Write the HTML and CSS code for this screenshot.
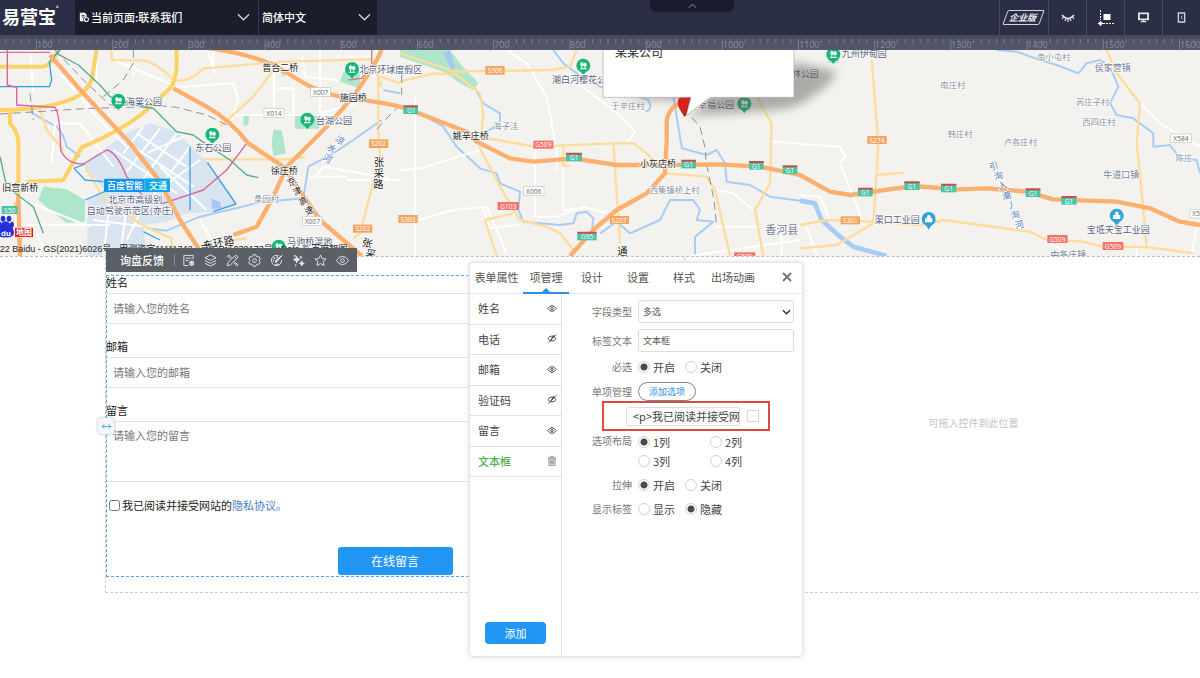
FILE: index.html
```html
<!DOCTYPE html>
<html lang="zh-CN">
<head>
<meta charset="utf-8">
<title>易营宝</title>
<link rel="stylesheet" href="styles.css">
</head>
<body>
<header class="topbar">
  <div class="logo">易营宝<sup>®</sup></div>
  <div class="pick pick-page">
    <svg class="pick-icon" viewBox="0 0 12 12" width="10" height="12"><path d="M1 1h6l2 2v3a3 3 0 0 0-3 5H1z" fill="#fff"/><path d="M3 4h4M3 6h3" stroke="#1b1d2d"/><circle cx="9" cy="9" r="2.4" fill="none" stroke="#fff" stroke-width="1.3"/></svg>
    <select aria-label="当前页面"><option>当前页面:联系我们</option></select>
    <svg class="chev" viewBox="0 0 14 8" width="13" height="8"><path d="M1 1l6 6 6-6" fill="none" stroke="#d6d8e0" stroke-width="1.3"/></svg>
  </div>
  <div class="pick pick-lang">
    <select aria-label="语言"><option>简体中文</option></select>
    <svg class="chev" viewBox="0 0 14 8" width="13" height="8"><path d="M1 1l6 6 6-6" fill="none" stroke="#d6d8e0" stroke-width="1.3"/></svg>
  </div>
  <button class="pull" aria-label="收起"><svg viewBox="0 0 10 6" width="9" height="6"><path d="M1 5l4-4 4 4" fill="none" stroke="#9a9dab"/></svg></button>
  <nav class="tools">
    <button class="tool tool-wide"><span class="edition">企业版</span></button>
    <button class="tool" aria-label="隐藏"><svg viewBox="0 0 14 10" width="14" height="10"><path d="M1 2q6 7 12 0" fill="none" stroke="#e3e4ea" stroke-width="1.500"/><path d="M2.500 4L1 6M5 5.500L4 8M7 6v3M9 5.500l1 2.500M11.500 4L13 6" fill="none" stroke="#e3e4ea" stroke-width="1.200"/></svg></button>
    <button class="tool" aria-label="参考线"><svg viewBox="0 0 16 16" width="16" height="16"><path d="M2.500 0v10M5 13.500h11" stroke="#fff" stroke-dasharray="2 1"/><circle cx="2.500" cy="13.500" r="1.500" fill="#2b2f45" stroke="#fff"/><path d="M2.500 11v5M0 13.500h5" stroke="#fff"/><path d="M5.500 4h7v6h-7z" fill="#fff"/></svg></button>
    <button class="tool" aria-label="电脑"><svg viewBox="0 0 12 12" width="11" height="11"><path d="M1 1.500h10v6.500H1z" fill="none" stroke="#e3e4ea" stroke-width="2"/><path d="M6 8v2M3 10.500h6" stroke="#e3e4ea" stroke-width="1.500"/></svg></button>
    <button class="tool" aria-label="手机"><svg viewBox="0 0 10 12" width="9" height="11"><path d="M1.500 1h7v10h-7z" fill="none" stroke="#d0d2da" stroke-width="1.500"/><path d="M6 4L4.500 5.500 6 8" fill="none" stroke="#d0d2da"/></svg></button>
  </nav>
</header>

<svg class="ruler" width="100%" height="15" aria-hidden="true">
  <defs>
    <linearGradient id="rg" x2="0" y2="1"><stop offset="0" stop-color="#434757"/><stop offset=".4" stop-color="#4f5466"/><stop offset="1" stop-color="#525769"/></linearGradient>
    <pattern id="ticks" x="36" width="76.2" height="15" patternUnits="userSpaceOnUse">
      <path d="M.5 4V15M8.100 4v4M15.700 4v4M23.300 4v4M31 4v4M38.600 4v5M46.200 4v4M53.800 4v4M61.400 4v4M69 4v4" stroke="#858a99" stroke-width=".8"/>
    </pattern>
  </defs>
  <rect width="100%" height="15" fill="url(#rg)"/><rect width="100%" height="15" fill="url(#ticks)"/>
  <g class="ruler-num"><text x="37" y="13">100</text><text x="113" y="13">200</text><text x="189" y="13">300</text><text x="265" y="13">400</text><text x="341" y="13">500</text><text x="418" y="13">600</text><text x="494" y="13">700</text><text x="570" y="13">800</text><text x="646" y="13">900</text><text x="723" y="13">1000</text><text x="799" y="13">1100</text><text x="875" y="13">1200</text><text x="951" y="13">1300</text><text x="1027" y="13">1400</text><text x="1104" y="13">1500</text><text x="1180" y="13">1600</text></g>
</svg>

<section class="map">
<svg viewBox="0 150 3600 618" preserveAspectRatio="xMidYMid slice" role="img" aria-label="地图">
  <defs>
    <filter id="soft" x="-20%" y="-20%" width="140%" height="140%"><feGaussianBlur stdDeviation="14"/></filter>
    <g id="park"><path d="M-10 16L0 29 10 16z" fill="#17b877"/><circle r="21" fill="#17b877"/><path d="M-5-11a6 7 0 0 1 2 13v6h7V3a5 6 0 0 1 1-12 5 6 0 0 1 1 12v5h4v3h-20V8h4V2a6 7 0 0 1 1-13z" fill="#fff"/></g>
    <g id="works"><path d="M-10 16L0 32 10 16z" fill="#2ba3dd"/><circle r="21" fill="#2ba3dd"/><path d="M-11 10V-2h6v-7l5-4 6 4v7h5v12z" fill="#fff"/></g>
  </defs>
  <rect y="150" width="3600" height="618" fill="#f3f2ee"/>
  <path fill="#d8e5f0" d="M250 490L380 400 450 370 530 395 575 440 622 487 708 612 640 635 560 640 500 665 430 675 440 768H262V600L310 570z"/>
  <path fill="#aee6cb" d="M130 560l70 8 55 32v65l-55 3-50-38-35-30zM820 390h25l13 70-38 8-5-38zM730 348h17l-2 27-15 3zM885 348h72v38h-72zM1030 215h50v50l-60-20zM1200 150h150l30 40 55 60-15 20-40-20-50-35-130-45zM840 215l20 5-10 12zM2485 170h30v18h-30z"/>
  <path fill="#a9c6f5" d="M635 595l25 12 5 18-30 3zM1330 160l20-10 15 55-10 5z"/>
  <g class="river">
    <path d="M1200 280l-50-10M1145 360L1060 420 1000 460 925 500 910 595 780 607 708 625 600 650 500 692 440 685M90 335q40 25 80 45 20 20 30 60l40 30"/>
    <path d="M1200 320l60 20 70 40 40 60 70 65 50 15 10 30 60 25-5 55 15 35 110 10 40-5 10-30 30-5 20 20-5 45M1800 700l50-35 40 35 90-40 30-60h70l20 30-10 30 50 5-55 45v58"/>
    <path d="M1425 265l25 45 50 30v30l-40 25-30 30M1660 150l30 40 40 30 70 40 90 20 55 20q15 30-10 35M2020 290l25 150 0 5 75 20 30-15 25 40 5 55 70 10 60 35 90 12"/>
    <path d="M2990 150l60 5 70 25 50 15 65 25 25-30 40-10 30 20 25 60-25 50 20 35 50 10 60 45v40l50-5 30 40 50 5 10 40"/>
  </g>
  <path class="river wide" d="M2400 602l45 8 20 50 55 50 40 30 100 28"/>
  <g class="street">
    <path d="M90 150l10 130M180 220l110 130 90 90M290 182v80M340 180l180 75M400 170v60M640 150v60l0-10M625 160l20 60M520 262l180-12M700 248l15 50-20 60M160 370h80L340 500M165 370l-10 120M822 200v145h-130M822 345h180M960 150v190l110-30M905 170l10 60 100 10M830 265h50v80M1010 170h100l20 60M0 675h330M70 600l200 80M100 680l40 88M930 530h110M940 540l30-40 200 35M660 768l-60-110M1040 540l160 0M1130 150v40l70 10"/>
    <path d="M1520 150l60 40 60 100 30 160v60M1740 255l100 75 65 65-25 35M1200 510l60-5 180-55M1245 290v478M1255 660l105-30 100-10 60 140M1605 440v210h65l80-30 90 25M1690 500v130l60-5M2315 425l85 5M2150 570l50 10 60 50M2145 680h255M2070 768l330-48M2345 680v88M1450 625l20 60 90-10"/>
    <path d="M2400 432l120 8 15 30-15 20 67 170M3420 310l60 60 120 70M2400 585l60 5 30 70M2420 680l30 88M3130 720l90 48M3410 740v28M3590 680l-15 88"/>
    <path d="M370 420l210 140M340 450l190 130M430 380l-60 80M480 385l-100 130M530 400l-110 150M570 440L450 600M600 480L460 580M280 660l160 20M330 600l-20 168M380 620l-20 148M430 620l-50 100M480 500l140 130M440 460l110-50M410 400l150 100"/>
  </g>
  <g class="minor">
    <path d="M335 150v30l105 2q60 30 80 58 50 10 90-35l240-20 265-7M835 190l-75 100-100 90 M120 330l20 60 50 60M255 500l60 100 120 80 80 35V768M610 478h245l60-6M1140 230l60 20M1135 200v190l5 80-60 230-20 15M700 720l40-5M1115 180l30 80"/>
    <path d="M1200 160l120 40 40 15 290-5 60-10 20-50M1200 245l100-25 70 5 70 55 10 60-10 105 60 115 60 100 80 20 40 20 40 50M1460 415l90 15 50 10 240-10h60l40 30 30 30M1840 430l20 300M1690 430v67h20M2270 290l45 80-5 180-45 80 25 138M2000 520l120 10 25 40 45 198M1455 660l85-20M1455 660l35 108"/>
    <path d="M2615 180l20 250-15 245M2630 525l80-7M3320 150l30 70 70 90-10 120 10 90 20 220M2400 675l80-15 140 5 140 10 70-15 220 30 40 5 50 25 110 5 50 13 150 4 130 18M2400 745l110-10 110-65"/>
  </g>
  <g class="major"><path d="M0 200h130q25-5 45-50M290 150l-15 90q-15 30-35 45-80 45-240 45M30 330v40q30 30 25 80v150l-20 40M530 150v40q0 50-20 75l-70 65q-70 60-195 112l-55 98-110 5"/></g>
  <g class="rail"><path d="M165 150l85 90 80 75h120l80 7 90 23 80 40 60 50 120 100M400 150v40l-30 50-60 50M0 342l270-17 180-5M90 280l10 80M1200 315l-50 50-25 30M1205 225v60M2050 325l50 55 17 70v30l25 120 8 80"/></g>
  <g class="metro">
    <path stroke="#2aa2dc" d="M0 260h148l7-20-7-55 32-35"/>
    <path stroke="#52ad91" d="M170 160l65 35 65 60 30 35q70 30 130 35l70 70 50 10 35 25 75 50 50 45 35 8M0 470l20 90 80 60 30 80"/>
    <path stroke="#d962a0" d="M22 150v105l28 7v53l115 7q15 18 17 128 18 42 68 42l70-42q30 5 60 80l50 60 60 20 120-40 70-60 60-80"/>
    <path stroke="#cf7b86" d="M0 157h150M1045 240l40-5 30-40v-45"/>
    <path stroke="#3f9fe8" d="M222 505l33-13M222 505l33 35 55 5M570 440v190M622 487l86 125-68 23M255 600l70-30M430 695l50 25"/>
  </g>
  <g class="express"><path d="M150 165l100 115 140 150 90 115 60 115 70 108M520 265l100 55q70 40 125 110l105 70 110 160 125 108M1145 150l-25 50-60 90-80 90-120 120-40 90-50 90-70 25M55 590l5 178"/>
    <path d="M630 145q110 15 190 50c60 30 100 70 180 90s150 15 230 45l170 65 30 30 100 50 70 10 120-10 130 20 150 0 160-2 120 7 120 25 90 50 60 10 70-10 120-17 130 10 90-3 120 10 80 23 190 7 100 20 90 40 60 10M2060 300q-60 20-60 70l0 50-5 100-55 60-90 50-70 60-70 78"/></g>

  <g class="tag tag-w"><rect x="932" y="263" width="60" height="26"/><rect x="792" y="326" width="60" height="26"/><rect x="1570" y="560" width="62" height="26"/><rect x="908" y="650" width="58" height="26"/><rect x="3512" y="402" width="62" height="26"/><rect x="3570" y="628" width="62" height="26"/></g>
  <g class="tag tag-o"><rect x="1456" y="198" width="58" height="26"/><rect x="1107" y="418" width="58" height="26"/><rect x="1195" y="645" width="58" height="24"/><rect x="1059" y="674" width="58" height="24"/><rect x="1830" y="648" width="57" height="24"/><rect x="2602" y="408" width="58" height="24"/><rect x="2522" y="649" width="58" height="24"/></g>
  <g class="tag tag-r"><rect x="1600" y="422" width="60" height="24"/><rect x="1493" y="606" width="64" height="24"/><rect x="3142" y="705" width="61" height="24"/><rect x="3308" y="726" width="62" height="24"/><rect x="2202" y="757" width="64" height="24"/></g>
  <g class="tag tag-g"><rect x="1210" y="318" width="44" height="24"/><rect x="1698" y="460" width="48" height="24"/><rect x="2044" y="481" width="44" height="24"/><rect x="2247" y="485" width="44" height="24"/><rect x="2348" y="498" width="44" height="24"/><rect x="1732" y="697" width="58" height="24"/><rect x="2574" y="565" width="44" height="24"/><rect x="2713" y="546" width="46" height="24"/><rect x="2823" y="553" width="46" height="24"/><rect x="3077" y="567" width="44" height="24"/><rect x="3184" y="590" width="46" height="24"/><rect x="5" y="618" width="48" height="24"/></g>
  <path stroke="#c7524d" stroke-width="6" d="M1210 319h44M1698 461h48M2044 482h44M2247 486h44M2348 499h44M1732 698h58M2574 566h44M2713 547h46M2823 554h46M3077 568h44M3184 591h46"/>
  <g class="tagtext dark"><text x="962" y="284">X007</text><text x="822" y="347">X014</text><text x="1601" y="581">X006</text><text x="937" y="671">X007</text><text x="3543" y="423">X584</text><text x="3600" y="649">X584</text></g>
  <g class="tagtext"><text x="1485" y="219">S306</text><text x="1136" y="438">S202</text><text x="1224" y="665">S303</text><text x="1088" y="694">S202</text><text x="1858" y="668">S207</text><text x="2631" y="428">S274</text><text x="2551" y="669">S301</text><text x="1630" y="442">G509</text><text x="1525" y="626">G103</text><text x="3172" y="725">G509</text><text x="3339" y="746">G509</text><text x="2234" y="777">G509</text><text x="1234" y="339">G1</text><text x="1722" y="481">G1</text><text x="2066" y="502">G1</text><text x="2269" y="506">G1</text><text x="2370" y="519">G1</text><text x="1761" y="718">G95</text><text x="2596" y="586">G1</text><text x="2736" y="567">G1</text><text x="2846" y="574">G1</text><text x="3099" y="588">G1</text><text x="3207" y="611">G1</text><text x="29" y="639">S50</text></g>

  <use href="#park" x="355" y="302"/><use href="#park" x="1056" y="207"/><use href="#park" x="922" y="359"/><use href="#park" x="637" y="404"/><use href="#park" x="1750" y="197"/><use href="#park" x="2500" y="163"/><use href="#park" x="2233" y="311"/><use href="#park" x="836" y="740"/>
  <use href="#works" x="2786" y="657"/><use href="#works" x="3350" y="647"/>

  <g class="place"><text x="378" y="315">海棠公园</text><text x="1078" y="219">北京环球度假区</text><text x="948" y="372">台湖公园</text><text x="586" y="454">东石公园</text><text x="1656" y="248">潮白河樱花公</text><text x="2525" y="172">九州伊甸园</text><text x="2375" y="231">林公园</text><text x="2094" y="323">幸福公园</text><text x="325" y="610">北京市高级别</text><text x="260" y="641">自动驾驶示范区(亦庄)</text><text x="2624" y="668">渠口工业园</text><text x="3260" y="700">宝坻天宝工业园</text><text x="862" y="735">马驹桥湿地</text></g>
  <g class="place bridge"><text x="787" y="214">普合二桥</text><text x="1019" y="304">施园桥</text><text x="1358" y="417">姚辛庄桥</text><text x="1920" y="501">小灰店桥</text><text x="812" y="522">徐庄桥</text><text x="7" y="572">旧宫新桥</text></g>
  <g class="place bridge big"><text x="1852" y="764">通</text><text x="1122" y="497">张</text><text x="1121" y="531">采</text><text x="1120" y="565">路</text><text x="1086" y="740" transform="rotate(15 1100 730)">张</text><text x="1096" y="772" transform="rotate(15 1110 762)">采</text><text x="610" y="738" transform="rotate(-12 660 730)">东环路</text></g>
  <g class="place bridge"><text x="862" y="554" transform="rotate(-30 876 544)">京</text><text x="878" y="583" transform="rotate(-30 892 573)">津</text><text x="896" y="612" transform="rotate(-30 910 602)">高</text><text x="914" y="641" transform="rotate(-30 928 631)">速</text></g>
  <g class="place village"><text x="762" y="605">桑园村</text><text x="1480" y="388">海子洼</text><text x="1834" y="326">于辛庄村</text><text x="1949" y="580">西集镇桥上村</text><text x="3111" y="181">南小屯村</text><text x="2821" y="263">南庄村</text><text x="3228" y="314">芮庄子村</text><text x="3247" y="376">西四庄村</text><text x="2843" y="411">韩庄村</text><text x="3011" y="435">卢各庄村</text><text x="3527" y="484">陈庄</text></g>
  <g class="place town"><text x="3284" y="212">侯家营镇</text><text x="3310" y="535">牛道口镇</text><text x="3151" y="773">中各庄镇</text></g>
  <g class="place town county"><text x="2296" y="702">香河县</text></g>
  <g class="place water"><text x="1006" y="430" transform="rotate(35 1018 422)">凉</text><text x="984" y="455" transform="rotate(40 996 442)">水</text><text x="970" y="486" transform="rotate(30 984 474)">河</text><text x="2968" y="508" transform="rotate(-15 2982 498)">引</text><text x="2982" y="537" transform="rotate(-15 2996 527)">洵</text><text x="2994" y="567" transform="rotate(-15 3006 556)">入</text><text x="3006" y="597" transform="rotate(-15 3020 587)">潮</text><text x="3020" y="626" transform="rotate(-15 3032 616)">丿</text><text x="3032" y="654" transform="rotate(-15 3044 644)">洵</text><text x="3044" y="684" transform="rotate(-15 3056 673)">河</text></g>

  <rect x="312" y="536" width="198" height="40" rx="4" fill="#1095ee"/><path d="M434 536h72q4 0 4 4v32q0 4-4 4h-72z" fill="#10a9e8"/><path d="M434 540v32" stroke="#7ccbf7" stroke-width="2"/>
  <g class="badge"><text x="321" y="566">百度智能</text><text x="447" y="566">交通</text></g>

  <path d="M1850 300L2400 190 2510 215Q2500 250 2440 285 2410 320 2330 330L2120 345 2060 350 2140 300z" fill="#555" opacity=".45" filter="url(#soft)"/>
  <path d="M2054 350Q2034 325 2034 312a25 24 0 0 1 50-10Q2080 325 2054 350z" fill="#d8201f"/><path d="M2050 350L2075 292V330z" fill="#a61515"/>
  <path d="M1809 140V292H2073L2058 347 2131 292H2382V140z" fill="#fff" stroke="#aaa" stroke-width="2"/>
  <text class="company" x="1845" y="172">某某公司</text>

  <g fill="#2632d9"><path d="M17 664C30 664 42 685 42 700q-2 14-25 12Q-8 714-10 698C-8 684 5 664 17 664z" stroke="#fff" stroke-width="3" paint-order="stroke"/><ellipse cx="-2" cy="674" rx="7" ry="10"/><ellipse cx="9" cy="656" rx="7" ry="9"/><ellipse cx="27" cy="656" rx="7" ry="9"/><ellipse cx="36" cy="674" rx="6" ry="9"/></g>
  <text class="baidu" x="3" y="708">du</text>
  <rect x="44" y="682" width="56" height="30" fill="#e01b1b" stroke="#fff" stroke-width="2"/><text class="baidu" x="48" y="706">地图</text>
  <text class="copyright" x="-1" y="755">22 Baidu - GS(2021)6026号 - 甲测资字11111342 - 京ICP证030173号 - Data © 百度智图</text>
</svg>
</section>

<main class="stage">
  <div class="columns">
    <div class="column">
      <form class="inquiry">
        <div class="toolbar">
          <span class="toolbar-name">询盘反馈</span>
          <button type="button" aria-label="表单"><svg viewBox="0 0 14 14"><path d="M12 6V1.500H2v11h5M4 4.500h6M4 7h3"/><circle cx="10.500" cy="10" r="2.200"/><path d="M10.500 7v6M8 8.500l5 3M13 8.500l-5 3"/></svg></button>
          <button type="button" aria-label="层级"><svg viewBox="0 0 14 14"><path d="M7 1l6 3-6 3-6-3zM1 7l6 3 6-3M1 10l6 3 6-3"/></svg></button>
          <button type="button" aria-label="设计"><svg viewBox="0 0 14 14"><path d="M1.500 12.500l.5-3L10.500 1l2.500 2.500L4.500 12zM5 5L1.500 2.500 3 1l3 3M9 8.500l4 3-1.500 1.500-3-3.500M9 2.500L11.500 5"/></svg></button>
          <button type="button" aria-label="设置"><svg viewBox="0 0 14 14"><path d="M5.500.800h3l.500 1.700 1.200.700 1.700-.400 1.400 2.500L12 6.500v1l1.300 1.200-1.400 2.500-1.700-.400-1.200.700-.500 1.700h-3L5 11.500l-1.200-.700-1.700.400L.700 8.700 2 7.500v-1L.700 5.300l1.400-2.500 1.700.400L5 2.500z"/><circle cx="7" cy="7" r="2"/></svg></button>
          <button type="button" aria-label="样式"><svg viewBox="0 0 14 14"><path d="M9.500 2A5.500 5.500 0 1 0 12.500 6.500M5 12.500q3-3 5-1"/><path d="M13 1.500L8 7.500 6 9.500 6.300 7z" fill="#e8e9eb"/><path d="M3 7h1.500M4 4.500h1.500M7 3.500h1.500" stroke-width="1.600"/></svg></button>
          <button type="button" aria-label="动画"><svg viewBox="0 0 14 14"><path d="M5 2.500l1 2.500 2.500 1L6 7 5 9.500 4 7 1.500 6 4 5zM10.500 7.500l.7 2 2 .7-2 .7-.7 2-.7-2-2-.7 2-.7z" fill="#e8e9eb"/><path d="M9.500 2v3M8 3.500h3M3 1v2M2 2h2M4 11v2.500"/></svg></button>
          <button type="button" aria-label="收藏"><svg viewBox="0 0 14 14"><path d="M7 1l1.800 4 4.200.400-3.200 2.800 1 4.300L7 10.300 3.200 12.500l1-4.300L1 5.400 5.200 5z"/></svg></button>
          <button type="button" aria-label="预览"><svg viewBox="0 0 14 14"><path d="M.5 7Q3 2.500 7 2.500T13.500 7Q11 11.500 7 11.500T.5 7z"/><circle cx="7" cy="7" r="2"/></svg></button>
        </div>
        <label for="name">姓名</label>
        <input class="line" id="name" type="text" placeholder="请输入您的姓名">
        <label for="mail">邮箱</label>
        <input class="line" id="mail" type="text" placeholder="请输入您的邮箱">
        <label for="msg">留言</label>
        <textarea class="line" id="msg" placeholder="请输入您的留言"></textarea>
        <div class="agree"><input type="checkbox" id="agree"><label for="agree">我已阅读并接受网站的</label><a href="#">隐私协议。</a></div>
        <button type="button" class="submit">在线留言</button>
        <span class="handle"><svg viewBox="0 0 12 8" width="11" height="7"><path d="M1 4h10M3.500 1.500L1 4l2.500 2.500M8.500 1.500L11 4 8.500 6.500" fill="none" stroke="#3d9be0"/></svg></span>
      </form>
    </div>
    <div class="column drop">可拖入控件到此位置</div>
  </div>

  <aside class="panel">
    <div class="tabs">
      <button class="tab">表单属性</button><button class="tab active">项管理</button><button class="tab">设计</button><button class="tab">设置</button><button class="tab">样式</button><button class="tab">出场动画</button>
      <button class="close" aria-label="关闭"><svg viewBox="0 0 10 10" width="10" height="10"><path d="M1 1l8 8M9 1L1 9" stroke="#777" stroke-width="2"/></svg></button>
    </div>
    <div class="body">
      <div class="side">
        <ul class="items">
          <li>姓名<button aria-label="可见"><svg viewBox="0 0 12 10"><path d="M1 5q5-7 10 0-5 7-10 0z"/><circle cx="6" cy="5" r="1.500"/></svg></button></li>
          <li>电话<button aria-label="不可见"><svg viewBox="0 0 12 10"><path d="M1 5q5-6 10 0-5 6-10 0zM11 0L2 10M8 1L4 8"/></svg></button></li>
          <li>邮箱<button aria-label="可见"><svg viewBox="0 0 12 10"><path d="M1 5q5-7 10 0-5 7-10 0z"/><circle cx="6" cy="5" r="1.500"/></svg></button></li>
          <li>验证码<button aria-label="不可见"><svg viewBox="0 0 12 10"><path d="M1 5q5-6 10 0-5 6-10 0zM11 0L2 10M8 1L4 8"/></svg></button></li>
          <li>留言<button aria-label="可见"><svg viewBox="0 0 12 10"><path d="M1 5q5-7 10 0-5 7-10 0z"/><circle cx="6" cy="5" r="1.500"/></svg></button></li>
          <li class="current">文本框<button class="trash" aria-label="删除"><svg viewBox="0 0 12 13"><path d="M2 3l.5 9h7l.5-9z" fill="#d4d8dd"/><path d="M1 3h10M4 2.500V1h4v1.500M4.500 5v5M6 5v5M7.500 5v5"/></svg></button></li>
        </ul>
        <button class="add">添加</button>
      </div>
      <div class="settings">
        <div class="row"><label class="key" for="ftype">字段类型</label><span class="selectwrap"><select class="box" id="ftype"><option>多选</option></select><svg viewBox="0 0 10 6" width="9" height="6"><path d="M1 1l4 4 4-4" fill="none" stroke="#333" stroke-width="1.600"/></svg></span></div>
        <div class="row"><label class="key" for="ftext">标签文本</label><input class="box" id="ftext" type="text" value="文本框"></div>
        <div class="row"><span class="key">必选</span><div class="radios"><label><input type="radio" name="req" checked>开启</label><label><input type="radio" name="req">关闭</label></div></div>
        <div class="row flush"><span class="key">单项管理</span><button class="addopt">添加选项</button></div>
        <div class="option"><input class="opttext" type="text" aria-label="选项内容" value="&lt;p&gt;我已阅读并接受网站的"><input type="checkbox" class="optcheck" aria-label="默认选中"></div>
        <div class="row tall"><span class="key">选项布局</span><div class="radios grid"><label><input type="radio" name="cols" checked>1列</label><label><input type="radio" name="cols">2列</label><label><input type="radio" name="cols">3列</label><label><input type="radio" name="cols">4列</label></div></div>
        <div class="row"><span class="key">拉伸</span><div class="radios"><label><input type="radio" name="str" checked>开启</label><label><input type="radio" name="str">关闭</label></div></div>
        <div class="row"><span class="key">显示标签</span><div class="radios"><label><input type="radio" name="show">显示</label><label><input type="radio" name="show" checked>隐藏</label></div></div>
      </div>
    </div>
  </aside>
</main>
</body>
</html>
```
FILE: styles.css
```css
* { box-sizing: border-box; }
body { margin: 0; background: #fff; color: #333; font: 11px/16px "Noto Sans CJK SC", sans-serif; overflow-x: hidden; }
button, input, select, textarea { font: inherit; color: inherit; margin: 0; }
button { border: 0; background: none; padding: 0; display: flex; align-items: center; justify-content: center; cursor: pointer; }
svg { display: block; }

.topbar { display: flex; height: 35px; background: #2b2f45; color: #fff; position: relative; }
.logo { width: 75px; padding-left: 2px; font-size: 18px; line-height: 32px; font-weight: 700; display: flex; }
.logo sup { font-size: 5px; line-height: 16px; }
.pick { display: flex; align-items: center; background: #1b1d2d; padding: 0 8px 1px 4px; }
.pick-page { width: 184px; border-right: 1px solid #35394d; }
.pick-lang { width: 118px; padding: 0 6px 1px 0; }
.pick select { appearance: none; border: 0; background: none; flex: 1; min-width: 0; padding: 0 2px; font-weight: 500; }
.pick-lang select { padding-left: 3px; }
.pull { position: absolute; left: 650px; top: 0; width: 84px; height: 12px; background: #1b1d2d; border-radius: 0 0 6px 6px; }
.tools { display: flex; margin-left: auto; }
.tool { width: 38px; border-left: 1px solid #454960; }
.tool-wide { width: 49px; }
.edition { border: 1px solid #d3d5de; border-radius: 2px; transform: skewX(-20deg); padding: 0 4px; font-size: 9px; line-height: 13px; font-weight: 700; color: #e6e7ee; }

.ruler-num { font: 9px "Noto Sans", sans-serif; fill: #858a99; }

.map { height: 207px; border-bottom: 1px dashed #bbb; overflow: hidden; }
.map svg { width: 100%; height: 206px; }
.river, .street, .minor, .major, .rail, .metro, .express { fill: none; stroke-linejoin: round; }
.river { stroke: #a9ccf7; stroke-width: 6; }
.river.wide { stroke-width: 14; }
.street { stroke: #fff; stroke-width: 6; }
.minor { stroke: #fedd9c; stroke-width: 7; }
.major { stroke: #fdd264; stroke-width: 12; }
.rail { stroke: #8d929b; stroke-width: 3; stroke-dasharray: 24 14; }
.metro { stroke-width: 4; }
.express { stroke: #fcaf6e; stroke-width: 13; }
.tag-w { fill: #fff; stroke: #c5c5c5; stroke-width: 2; }
.tag-o { fill: #f3a55f; }
.tag-r { fill: #f4736b; }
.tag-g { fill: #4cc5a6; }
.tagtext { font: 20px "Open Sans", sans-serif; fill: #fff; text-anchor: middle; }
.tagtext.dark { fill: #666; }
.place { font-size: 27px; fill: #56607a; stroke: #fff; stroke-width: 4; paint-order: stroke; }
.bridge { fill: #222; }
.big { font-size: 31px; }
.village { font-size: 25px; fill: #8890a0; }
.town { fill: #737d95; }
.county { font-size: 33px; }
.water { fill: #4a76bd; }
.badge { font-size: 27px; font-weight: 500; fill: #fff; }
.company { font-size: 36px; fill: #222; }
.baidu { font: 700 24px "Liberation Sans", "Noto Sans CJK SC", sans-serif; fill: #fff; }
.copyright { font: 27px "Liberation Sans", "Noto Sans CJK SC", sans-serif; fill: #222; }

.stage { position: relative; min-height: 421px; overflow-x: clip; }
.columns { display: grid; grid-template-columns: 1fr 1fr; margin-left: 105px; width: calc(100% - 42px); border: 1px dashed #ccc; border-top: 0; min-height: 336px; }
.drop { display: flex; align-items: center; justify-content: center; color: #c4c4c4; font-size: 10px; border-left: 1px dashed #ccc; padding-bottom: 3px; }
.inquiry { position: relative; margin-top: 18px; margin-bottom: 15px; border: 1px dashed #58a6e6; display: flex; flex-direction: column; color: #222; min-height: 302px; }
.inquiry > label { line-height: 13px; padding-bottom: 4px; margin-left: -1px; }
.line { border: 1px solid #e2e2e2; border-left: 0; padding: 0 6px 2px; height: 31px; background: none; outline: 0; margin-bottom: 16px; }
.line::placeholder { color: #777; opacity: 1; }
textarea.line { height: 61px; padding-top: 5px; resize: none; margin-bottom: 14px; }
.agree { display: flex; align-items: center; height: 18px; padding-left: 2px; margin-bottom: 33px; }
.agree input { width: 11px; height: 11px; margin-right: 2px; }
.agree a { color: #3f7fc4; text-decoration: none; }
.submit { align-self: center; width: 115px; height: 28px; border-radius: 3px; background: #2196f3; color: #fff; font-size: 12px; }
.handle { position: absolute; left: -9px; top: 142px; width: 16px; height: 16px; border-radius: 4px; background: #f4f8fb; box-shadow: 0 0 3px #9ab; display: flex; align-items: center; justify-content: center; }
.toolbar { position: absolute; left: -1px; top: -28px; height: 24px; width: 251px; background: #5b5f66; color: #fff; display: flex; align-items: center; padding-left: 14px; }
.toolbar-name { font-weight: 500; border-right: 1px solid #8a8d92; padding-right: 10px; line-height: 12px; margin-right: 2px; }
.toolbar button { width: 22px; height: 24px; }
.toolbar svg { width: 13px; height: 13px; fill: none; stroke: #e8e9eb; }

.panel { position: absolute; left: 469px; top: 5px; width: 334px; height: 395px; background: #fff; border: 1px solid #e4e4e4; border-radius: 4px; box-shadow: 0 0 6px #ddd; display: flex; flex-direction: column; color: #444; }
.tabs { display: flex; height: 31px; border-bottom: 1px solid #e6e6e6; }
.tab { width: 46px; color: #555; position: relative; white-space: nowrap; padding-bottom: 3px; }
.tab:first-child { width: 53px; }
.tab:nth-child(6) { width: 52px; }
.tab.active { box-shadow: 0 1px #2b90e6, inset 0 -1px #2b90e6; }
.tab.active::after { content: ""; position: absolute; bottom: 0; left: 18px; border: 5px solid transparent; border-top: 0; border-bottom-color: #2b90e6; }
.close { margin-left: auto; width: 30px; padding-bottom: 2px; }
.body { display: flex; flex: 1; }
.side { width: 92px; border-right: 1px solid #e2e2e2; display: flex; flex-direction: column; }
.items { list-style: none; margin: 0; padding: 0; height: 183px; display: grid; grid-auto-rows: 1fr; }
.items li { display: flex; align-items: center; justify-content: space-between; padding: 0 4px 1px 8px; border-bottom: 1px solid #e2e2e2; }
.items svg { width: 10px; height: 9px; fill: none; stroke: #444b58; stroke-width: 1.2; }
.items .trash svg { width: 10px; height: 12px; stroke: #8a9098; stroke-width: 1; }
.current { color: #4caf50; font-weight: 500; }
.add { margin: auto auto 12px 15px; width: 61px; height: 22px; border-radius: 4px; background: #2196f3; color: #fff; padding-bottom: 1px; }
.settings { flex: 1; padding: 6px 8px 0 0; }
.row { display: flex; align-items: center; min-height: 18px; margin-bottom: 6px; }
.flush { margin-bottom: 0; }
.key { width: 70px; text-align: right; margin-right: 6px; color: #777; font-size: 10px; }
.box { width: 100%; height: 23px; border: 1px solid #ddd; border-radius: 3px; padding: 0 4px; font-size: 9px; background: #fff; appearance: none; color: #555; }
.row > .box { flex: 1; min-width: 0; }
.selectwrap { flex: 1; position: relative; display: flex; }
.selectwrap svg { position: absolute; right: 3px; top: 9px; }
.radios { display: flex; }
.radios label { display: flex; align-items: center; width: 47px; line-height: 18px; white-space: nowrap; }
.radios.grid { display: grid; grid-template-columns: 72px 1fr; grid-auto-rows: 19px; }
.radios input { appearance: none; flex: none; width: 12px; height: 12px; border: 1px solid #d2d2d2; border-radius: 50%; margin-right: 3px; }
.radios input:checked { background: radial-gradient(circle, #4a4a4a 3px, transparent 4px); }
.tall { align-items: flex-start; }
.tall .key { line-height: 18px; }
.addopt { width: 58px; height: 19px; border: 1px solid #7d868f; border-radius: 10px; color: #2b90e6; font-size: 9px; }
.option { display: flex; align-items: center; width: 168px; height: 30px; margin: 0 0 1px 40px; border: 2px solid #d94a45; padding-left: 22px; }
.opttext { width: 114px; height: 19px; border: 1px solid #ddd; border-radius: 2px; padding: 0 0 0 6px; font-size: 11px; background: #fff; }
.optcheck { appearance: none; width: 12px; height: 12px; border: 1px solid #e0d4d4; margin-left: 7px; }
```
